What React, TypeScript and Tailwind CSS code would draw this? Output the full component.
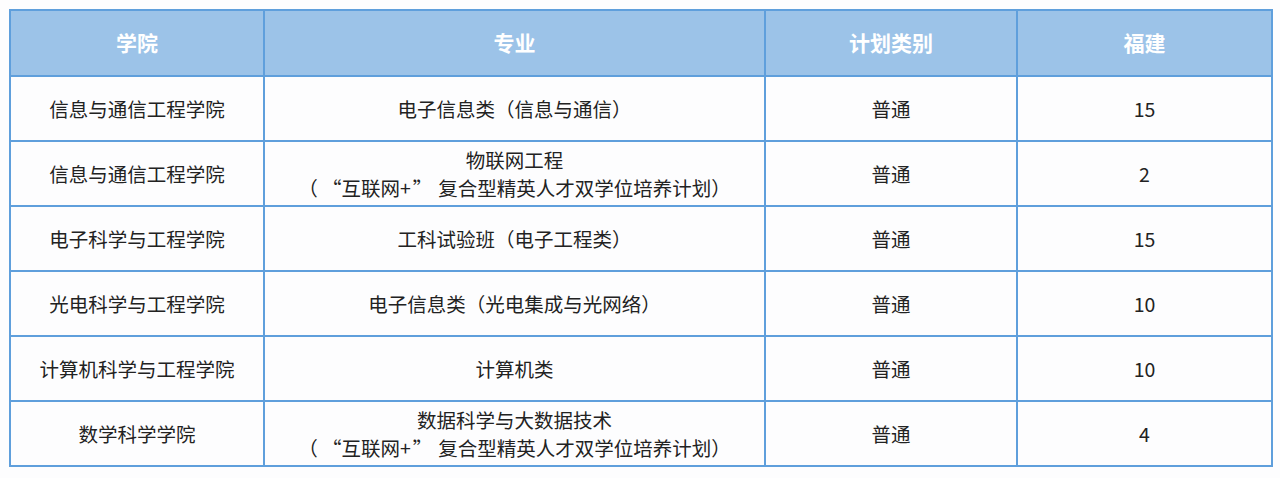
import React from "react";

const Plus = () => (
  <>
    <span>（</span>
    <span className="ml-[14px]">“互联网+</span>
    <span className="ml-[2px]">”</span>
    <span className="ml-[6px]">复合型精英人才双学位培养计划）</span>
  </>
);

const rows: [string, React.ReactNode[], string, string][] = [
  ["信息与通信工程学院", ["电子信息类（信息与通信）"], "普通", "15"],
  ["信息与通信工程学院", ["物联网工程", <Plus />], "普通", "2"],
  ["电子科学与工程学院", ["工科试验班（电子工程类）"], "普通", "15"],
  ["光电科学与工程学院", ["电子信息类（光电集成与光网络）"], "普通", "10"],
  ["计算机科学与工程学院", ["计算机类"], "普通", "10"],
  ["数学科学学院", ["数据科学与大数据技术", <Plus />], "普通", "4"],
];

const cell = "border-2 border-[#5f9fdc] text-center align-middle p-0";

export default function App() {
  return (
    <div
      className="w-[1280px] h-[478px] bg-[#fdfdfe] pt-[9px] pl-[9px]"
      style={{ fontFamily: '"Noto Sans CJK SC", "Noto Sans", sans-serif' }}
    >
      <table className="border-collapse table-fixed w-[1262px] text-[19.5px] text-[#222222]">
        <colgroup>
          <col className="w-[254px]" />
          <col className="w-[501px]" />
          <col className="w-[252px]" />
          <col className="w-[255px]" />
        </colgroup>
        <thead>
          <tr className="h-[66px] bg-[#9cc3e8]">
            {["学院", "专业", "计划类别", "福建"].map((h) => (
              <th key={h} className={`${cell} text-white font-bold text-[21px]`}>
                {h}
              </th>
            ))}
          </tr>
        </thead>
        <tbody>
          {rows.map((r, i) => (
            <tr key={i} className="h-[65px] bg-[#fdfdfe]">
              <td className={cell}>{r[0]}</td>
              <td className={`${cell} leading-[28px]`}>
                {r[1].map((l, j) => (
                  <div key={j}>{l}</div>
                ))}
              </td>
              <td className={cell}>{r[2]}</td>
              <td className={cell}>{r[3]}</td>
            </tr>
          ))}
        </tbody>
      </table>
    </div>
  );
}
